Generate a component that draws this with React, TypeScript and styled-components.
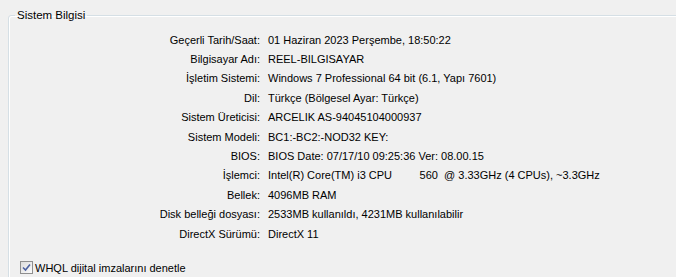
import React from 'react'
import styled, { createGlobalStyle } from 'styled-components'

const Global = createGlobalStyle`
	html, body {
		margin: 0;
		padding: 0;
		background: #f0f0f0;
		overflow: hidden;
	}
	body {
		font-family: "Liberation Sans", Arial, sans-serif;
		font-size: 11px;
		color: #000;
	}
`

const Page = styled.div`
	width: 676px;
	height: 277px;
	overflow: hidden;
	padding: 9px 0 0 8px;
	box-sizing: border-box;
`

const Group = styled.fieldset`
	margin: 0;
	width: 720px;
	padding: 9px 0 0 0;
	border: 1px solid #d5dfe5;
	border-radius: 3px;
	box-shadow: inset 1px 1px 0 #fff;
	height: 300px;
	box-sizing: border-box;
`

const Legend = styled.legend`
	margin-left: 6px;
	padding: 0 2px;
	font-size: 11.5px;
	color: #000;
`

const Info = styled.dl`
	display: grid;
	grid-template-columns: 251px auto;
	column-gap: 8px;
	grid-auto-rows: 19.4px;
	align-items: center;
	margin: 0;
`

const Label = styled.dt`
	text-align: right;
	white-space: nowrap;
`

const Value = styled.dd`
	margin: 0;
	white-space: pre;
`

const Check = styled.label`
	display: flex;
	align-items: center;
	gap: 2px;
	margin-top: 18px;
	margin-left: 11px;
`

const Box = styled.span`
	width: 11px;
	height: 11px;
	border: 1px solid #8f8f8f;
	background: linear-gradient(135deg, #dcdcdc, #fbfbfb);
	display: inline-flex;
	align-items: center;
	justify-content: center;
`

const rows: [string, string][] = [
	['Geçerli Tarih/Saat:', '01 Haziran 2023 Perşembe, 18:50:22'],
	['Bilgisayar Adı:', 'REEL-BILGISAYAR'],
	['İşletim Sistemi:', 'Windows 7 Professional 64 bit (6.1, Yapı 7601)'],
	['Dil:', 'Türkçe (Bölgesel Ayar: Türkçe)'],
	['Sistem Üreticisi:', 'ARCELIK AS-94045104000937'],
	['Sistem Modeli:', 'BC1:-BC2:-NOD32 KEY:'],
	['BIOS:', 'BIOS Date: 07/17/10 09:25:36 Ver: 08.00.15'],
	['İşlemci:', 'Intel(R) Core(TM) i3 CPU         560  @ 3.33GHz (4 CPUs), ~3.3GHz'],
	['Bellek:', '4096MB RAM'],
	['Disk belleği dosyası:', '2533MB kullanıldı, 4231MB kullanılabilir'],
	['DirectX Sürümü:', 'DirectX 11'],
]

export default function App() {
	return (
		<Page>
			<Global />
			<Group>
				<Legend>Sistem Bilgisi</Legend>
				<Info>
					{rows.map(([k, v]) => (
						<React.Fragment key={k}>
							<Label>{k}</Label>
							<Value>{v}</Value>
						</React.Fragment>
					))}
				</Info>
				<Check>
					<Box>
						<svg width="9" height="9" viewBox="0 0 9 9">
							<path d="M1 4.5 L3.5 7 L8 1.5" fill="none" stroke="#4c61a0" strokeWidth="1.6" />
						</svg>
					</Box>
					WHQL dijital imzalarını denetle
				</Check>
			</Group>
		</Page>
	)
}
